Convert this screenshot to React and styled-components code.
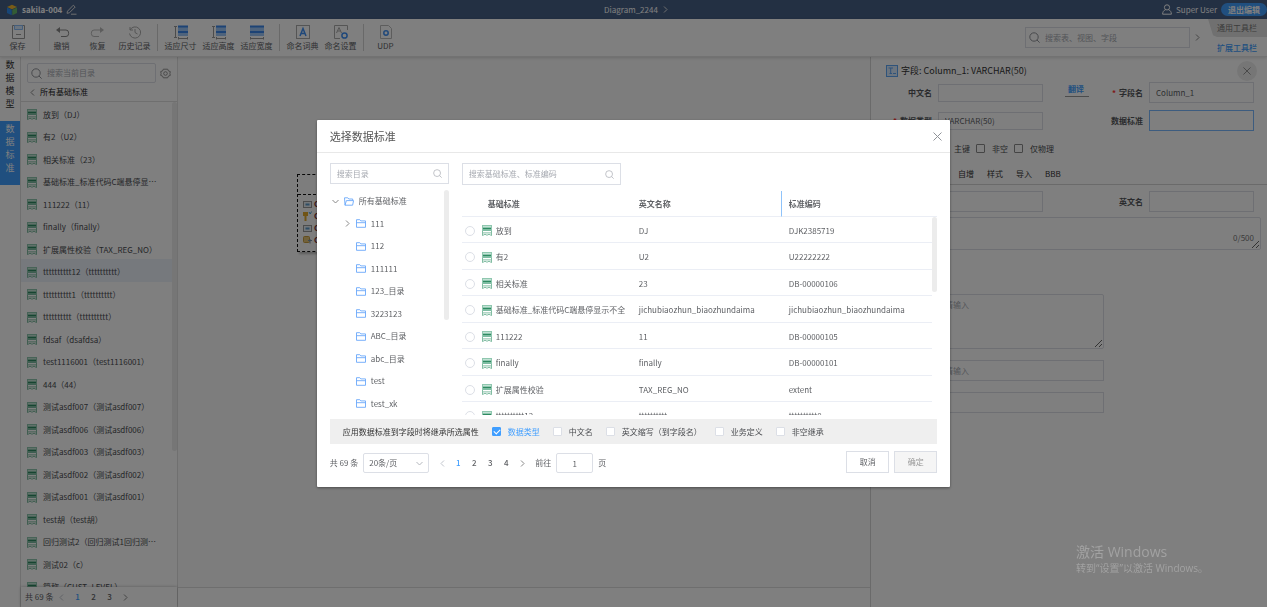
import React from 'react';
import styled, { createGlobalStyle, css } from 'styled-components';

const GlobalStyle = createGlobalStyle`
  * {
    box-sizing: border-box;
  }

  body {
    margin: 0;
    overflow: hidden;
  }

  body, input, button, select, textarea {
    font-family: 'Noto Sans CJK SC', 'Noto Sans', sans-serif;
    font-size: 8px;
    line-height: 12px;
    color: #606266;
  }

  button {
    border: none;
    background: none;
    padding: 0;
  }

  svg {
    display: block;
    flex: none;
  }
`;

const Page = styled.div`
  height: 100vh;
  display: flex;
  flex-direction: column;
  background: #fff;
`;

/* ---------- top bar ---------- */

const TopBar = styled.header`
  height: 19px;
  flex: none;
  display: grid;
  grid-template-columns: 1fr auto 1fr;
  align-items: center;
  padding-left: 6px;
  background: #466087;
  color: #fff;
`;

const TopGroup = styled.div`
  display: flex;
  align-items: center;
  gap: 4px;
  justify-content: ${(p) => (p.$end ? 'flex-end' : 'flex-start')};
  font-weight: ${(p) => (p.$strong ? 700 : 400)};
`;

const ExitButton = styled.button`
  width: 46px;
  height: 13px;
  border-radius: 7px;
  background: #409eff;
  color: #fff;
  font-weight: 700;
`;

/* ---------- toolbar ---------- */

const Toolbar = styled.nav`
  height: 38px;
  flex: none;
  display: flex;
  align-items: center;
  border-bottom: 1px solid #e4e4e4;
  box-shadow: 0 1px 3px rgba(0, 0, 0, 0.15);
  z-index: 1;
`;

const ToolGroup = styled.div`
  display: flex;
  gap: 1px;
  padding-right: 4px;
  margin-right: 4px;
  height: 27px;
  border-right: ${(p) => (p.$last ? 'none' : '1px solid #d2d2d2')};
`;

const ToolButton = styled.button`
  width: ${(p) => (p.$wide ? 37 : 35)}px;
  display: flex;
  flex-direction: column;
  align-items: center;
  justify-content: space-between;
  white-space: nowrap;
`;

const ToolSearch = styled.div`
  margin: 0 7px 0 auto;
  display: flex;
  align-items: center;
  gap: 4px;
  width: 176px;
`;

const SideLinks = styled.div`
  width: 59px;
  height: 37px;
  display: flex;
  flex-direction: column;
`;

const SideLink = styled.a`
  height: 18px;
  padding-left: 9px;
  line-height: 18px;
  text-decoration: none;
  color: #777;

  ${(p) =>
    p.$active
      ? css`
          height: 20px;
          line-height: 22px;
          color: #409eff;
          font-weight: 500;
        `
      : css`
          background: #e0e0e0;
          clip-path: polygon(0 0, 100% 0, 100% 100%, 9px 100%, 5px 90%);
        `}
`;

const SearchBox = styled.label`
  flex: 1;
  min-width: 0;
  height: ${(p) => p.$height || 20}px;
  display: flex;
  align-items: center;
  gap: 5px;
  padding: 0 3px;
  border: 1px solid #dcdfe6;
  border-radius: ${(p) => (p.$round ? 2 : 0)}px;
  background: #fff;

  input {
    flex: 1;
    min-width: 0;
    border: none;
    outline: none;
    padding: 0;
    background: none;
  }

  input::placeholder {
    color: #a8abb2;
  }
`;

/* ---------- workspace ---------- */

const Workspace = styled.div`
  flex: 1;
  min-height: 0;
  display: flex;
`;

const TabRail = styled.div`
  width: 21px;
  border-right: 1px solid #dedede;
`;

const RailTab = styled.button`
  display: block;
  width: 20px;
  height: 64px;
  padding: 0 5px 10px;
  font-size: 9px;
  line-height: 13px;
  background: ${(p) => (p.$active ? '#409eff' : '#fff')};
  color: ${(p) => (p.$active ? '#fff' : '#333')};
`;

const Sidebar = styled.aside`
  width: 157px;
  display: flex;
  flex-direction: column;
  border-right: 1px solid #e0e0e0;
`;

const SidebarSearch = styled.div`
  display: flex;
  align-items: center;
  gap: 4px;
  padding: 6px 6px 0;
`;

const Crumb = styled.div`
  display: flex;
  align-items: center;
  gap: 4px;
  height: 19px;
  padding-left: 8px;
  color: #222;
  border-bottom: 1px solid #dedede;
`;

const ListWrap = styled.div`
  flex: 1;
  min-height: 0;
  display: flex;
  overflow: hidden;
`;

const List = styled.ul`
  flex: 1;
  min-width: 0;
  margin: 0;
  padding: 0;
  list-style: none;
`;

const ListItem = styled.li`
  height: 22px;
  display: flex;
  align-items: center;
  gap: 6px;
  padding: 3px 0 0 6px;
  white-space: nowrap;
  color: #4a4c50;
  background: ${(p) => (p.$active ? '#ecf2fb' : 'transparent')};

  &:nth-child(even) {
    height: 23px;
  }
`;

const ScrollThumb = styled.div`
  width: 5px;
  height: ${(p) => p.$length}px;
  flex: none;
  border-radius: 3px;
  background: #ececec;
`;

const SidebarPager = styled.div`
  height: 20px;
  flex: none;
  padding-left: 4px;
  display: flex;
  align-items: center;
  box-shadow: 0 0 3px rgba(0, 0, 0, 0.3);
`;

const PageButton = styled.button`
  width: 16px;
  height: 16px;
  display: flex;
  align-items: center;
  justify-content: center;
  font-weight: 500;
  color: ${(p) => (p.$active ? '#409eff' : p.$muted ? '#c0c4cc' : '#606266')};
`;

const Pages = styled.div`
  display: flex;
`;

const Canvas = styled.main`
  flex: 1;
  position: relative;
  display: flex;
  flex-direction: column;
  justify-content: flex-end;
  background: #fafafa;
`;

const CanvasFooter = styled.div`
  height: 20px;
  border-top: 1px solid #dcdcdc;
  background: #fff;
`;

const Entity = styled.div`
  position: absolute;
  left: 119px;
  top: 117px;
  width: 90px;
  height: 78px;
  border: 1px dashed #111;
  box-shadow: 2px 2px 2px #bbb;
`;

const EntityHead = styled.div`
  height: 20px;
  border-bottom: 1px dashed #111;
`;

const EntityRow = styled.div`
  height: 12px;
  padding-left: 5px;
  display: flex;
  align-items: center;
  gap: 2px;
  color: #733;
  font-weight: 700;

  &:nth-child(2) {
    margin-top: 3px;
  }
`;

/* ---------- property panel ---------- */

const Panel = styled.aside`
  width: 397px;
  border-left: 1px solid #d5d5d5;
`;

const PanelHead = styled.div`
  height: 25px;
  display: flex;
  align-items: center;
  gap: 3px;
  padding: 2px 10px 0 15px;
  font-size: 9px;
  color: #333;
`;

const CloseCircle = styled.button`
  width: 20px;
  height: 20px;
  margin-left: auto;
  border-radius: 50%;
  display: flex;
  align-items: center;
  justify-content: center;
  background: #ededed;
`;

const Form = styled.div`
  display: grid;
  grid-template-columns: 61px 1fr 94px 1fr;
  grid-auto-rows: 21px;
  align-items: center;
  gap: 7px 6px;
  padding: ${(p) => p.$top || 0}px 13px 0 0;
`;

const Label = styled.label`
  display: flex;
  align-items: center;
  justify-content: flex-end;
  gap: 3px;
  color: #55575b;
  font-weight: 700;
`;

const Required = styled.span`
  color: #f33;
`;

const TranslateCell = styled.div`
  display: flex;
  align-items: center;
  justify-content: space-between;
  padding-left: 16px;
`;

const Translate = styled.button`
  height: 14px;
  padding: 0 5px 0 3px;
  border-bottom: 1px solid #999;
  margin-bottom: 6px;
  color: #409eff;
  font-weight: 700;
`;

const Field = styled.input`
  width: 100%;
  height: ${(p) => (p.$short ? 18 : 21)}px;
  padding: 0 6px;
  border: 1px solid ${(p) => (p.$focus ? '#7ab8ff' : '#dcdfe6')};
  background: #fff;
  outline: none;

  &::placeholder {
    color: #a8abb2;
  }
`;

const CheckRow = styled.div`
  display: flex;
  align-items: center;
  gap: 6px;
  height: 21px;
  margin-top: 7px;
  padding-left: 67px;
`;

const CheckLabel = styled.label`
  display: flex;
  align-items: center;
  gap: 7px;
  white-space: nowrap;
  color: ${(p) => (p.$checked ? '#409eff' : '#4a4c50')};
`;

const Checkbox = styled.input`
  appearance: none;
  position: relative;
  width: 9px;
  height: 9px;
  flex: none;
  margin: 0;
  border: 1px solid ${(p) => (p.$dark ? '#8a8a8a' : '#dcdfe6')};
  border-radius: 1px;
  background: #fff;

  &:checked {
    background: #409eff;
    border-color: #409eff;
  }

  &:checked::after {
    content: '';
    position: absolute;
    left: 2px;
    top: 0;
    width: 3px;
    height: 5px;
    border: solid #fff;
    border-width: 0 1px 1px 0;
    transform: rotate(45deg);
  }
`;

const PanelTabs = styled.div`
  height: 26px;
  display: flex;
  align-items: center;
  gap: 13px;
  padding: 4px 0 0 87px;
  border-bottom: 1px solid #d5d5d5;

  button {
    color: #333;
  }
`;

const Area = styled.textarea`
  display: block;
  width: 100%;
  height: ${(p) => p.$height}px;
  padding: 4px 6px;
  border: 1px solid #dcdfe6;
  border-radius: 2px;
  background: #fff;

  &::placeholder {
    color: #a8abb2;
  }
`;

const Comment = styled.div`
  position: relative;
  margin: 5px 6px 0 67px;
`;

const Counter = styled.span`
  position: absolute;
  right: 7px;
  bottom: 6px;
  color: #777;
`;

const Extras = styled.div`
  width: 166px;
  margin: 44px 0 0 67px;
  display: flex;
  flex-direction: column;
  gap: 11px;
`;

/* ---------- dialog ---------- */

const Overlay = styled.div`
  position: fixed;
  inset: 0;
  z-index: 10;
  display: flex;
  justify-content: center;
  align-items: flex-start;
  padding-top: 120px;
  background: rgba(0, 0, 0, 0.5);
`;

const Dialog = styled.section`
  width: 50%;
  background: #fff;
  border-radius: 1px;
  box-shadow: 0 1px 3px rgba(0, 0, 0, 0.4);
`;

const DialogHead = styled.div`
  height: 33px;
  display: flex;
  align-items: center;
  justify-content: space-between;
  padding: 0 8px 0 13px;
  border-bottom: 1px solid #e8e8e8;
`;

const DialogTitle = styled.h2`
  margin: 0;
  font-size: 11px;
  line-height: 16px;
  font-weight: 400;
  color: #555;
`;

const CloseButton = styled.button`
  display: flex;
`;

const DialogBody = styled.div`
  padding: 10px 13px 0;
`;

const Columns = styled.div`
  display: grid;
  grid-template-columns: 119px minmax(0, 1fr);
  gap: 13px;
  height: 252px;
`;

const Column = styled.div`
  display: flex;
  flex-direction: column;
  gap: 6px;
  min-height: 0;
`;

const DialogSearch = styled.div`
  display: flex;
  width: ${(p) => (p.$fit ? '159px' : '100%')};

  label {
    padding: 0 6px;
  }

  input::placeholder {
    color: #a8abb2;
  }
`;

const TreeItem = styled.li`
  height: 22px;
  display: flex;
  align-items: center;
  gap: 5px;
  padding-left: ${(p) => (p.$nested ? 14 : 2)}px;

  &:nth-child(even) {
    height: 23px;
  }
`;

const Arrow = styled.span`
  width: 7px;
  display: flex;
  justify-content: center;
`;

const TableWrap = styled.div`
  position: relative;
  flex: 1;
  min-height: 0;
  overflow: hidden;
`;

const TableTrack = styled.div`
  position: absolute;
  right: 0;
  top: 26px;
  bottom: 0;
  background: #fff;
`;

const Table = styled.table`
  width: 100%;
  table-layout: fixed;
  border-collapse: separate;
  border-spacing: 0;

  th, td {
    height: 26px;
    padding: 0 0 0 7px;
    text-align: left;
    border-bottom: 1px solid #ebeef5;
    white-space: nowrap;
  }

  th {
    font-weight: 700;
  }

  td {
    padding-top: 2px;
  }

  th:first-child {
    padding-left: 26px;
  }

  th:last-child {
    border-left: 1px solid #8fc3fa;
  }

  td:first-child {
    padding-left: 3px;
  }

  td:last-child {
    padding-left: 8px;
  }

  tbody tr:nth-child(even) td {
    height: 27px;
  }
`;

const NameCell = styled.label`
  display: flex;
  align-items: center;
  gap: 4px;
`;

const Radio = styled.input`
  appearance: none;
  width: 10px;
  height: 10px;
  margin: 0 3px 0 0;
  border: 1px solid #dcdfe6;
  border-radius: 50%;
`;

const InheritBar = styled.div`
  height: 25px;
  margin-top: 4px;
  display: flex;
  align-items: center;
  gap: 13px;
  padding-left: 13px;
  background: #efefef;
  color: #333;
`;

const DialogFoot = styled.div`
  height: 43px;
  display: flex;
  align-items: flex-start;
  justify-content: space-between;
  padding-top: 7px;
`;

const Pager = styled.div`
  display: flex;
  align-items: center;
  gap: 5px;
  padding-top: 2px;
`;

const SizePicker = styled.div`
  display: flex;
  align-items: center;
  width: 66px;
  height: 20px;
  padding-right: 5px;
  border: 1px solid #dcdfe6;
  border-radius: 2px;

  select {
    flex: 1;
    appearance: none;
    border: none;
    background: none;
    padding: 0 5px;
  }
`;

const JumpInput = styled.input`
  width: 37px;
  height: 20px;
  border: 1px solid #dcdfe6;
  border-radius: 2px;
  text-align: center;
`;

const Actions = styled.div`
  display: flex;
  gap: 5px;
`;

const ActionButton = styled.button`
  width: 43px;
  height: 22px;
  border: 1px solid #dcdfe6;
  background: #fff;

  &:disabled {
    background: #f5f5f5;
    color: #999;
  }
`;

const Watermark = styled.div`
  position: fixed;
  right: 58px;
  bottom: 32px;
  width: 133px;
  z-index: 11;
  font-family: 'Open Sans', 'Noto Sans CJK SC', sans-serif;
  font-size: 10px;
  line-height: 14px;
  white-space: nowrap;
  color: #a2a2a2;
`;

const WatermarkTitle = styled.div`
  font-size: 14px;
  line-height: 18px;
`;

/* ---------- icons ---------- */

const Search = ({ size = 11, color = '#909399' }) => (
  <svg width={size} height={size} viewBox="0 0 11 11" fill="none" stroke={color}>
    <circle cx="5" cy="5" r="4.2" />
    <path d="M8 8l2.6 2.6" />
  </svg>
);

const Chevron = ({ dir = 'right', color = '#888', size = 7 }) => {
  const paths = {
    right: 'M2 0.5L5 3.5L2 6.5',
    left: 'M5 0.5L2 3.5L5 6.5',
    down: 'M0.5 2L3.5 5L6.5 2',
  };
  return (
    <svg width={size} height={size} viewBox="0 0 7 7" fill="none" stroke={color}>
      <path d={paths[dir]} />
    </svg>
  );
};

const Cross = ({ size = 9, color = '#909399' }) => (
  <svg width={size} height={size} viewBox="0 0 9 9" fill="none" stroke={color}>
    <path d="M0.5 0.5l8 8M8.5 0.5l-8 8" />
  </svg>
);

const Folder = ({ open }) => (
  <svg width="10" height="9" viewBox="0 0 10 9" fill="none" stroke="#6aa8fb" strokeWidth="0.9">
    {open ? (
      <path d="M1 8.2L0.5 0.8H3.8L4.8 2H8.7V3.5M1 8.2L2.4 3.6H9.6L8.6 8.2Z" />
    ) : (
      <path d="M0.5 8.3V0.7H3.8L4.8 1.9H9.5V8.3ZM0.5 3.7H9.5" />
    )}
  </svg>
);

const StandardIcon = () => (
  <svg width="10" height="11" viewBox="0 0 10 11" fill="none">
    <rect x="0" y="0" width="10" height="6" fill="#8fc7af" />
    <path d="M1 1.5H9" stroke="#c3e2d5" />
    <path d="M1 3.5H9" stroke="#2f8a62" />
    <path d="M1 5H9" stroke="#6cb295" />
    <path d="M0.5 6V10.6M9.5 6V10.6M1 7.9H9M0.5 10.5L3 9.3L5 10.2L7 9.3L9.5 10.5" stroke="#74b598" strokeWidth="0.9" />
  </svg>
);

const Logo = () => (
  <svg width="12" height="12" viewBox="0 0 12 12">
    <path d="M6 0.8L11 3L6 5.3L1 3Z" fill="#f2b92e" />
    <path d="M1 3.6L5.7 5.8V11.3L1 8.9Z" fill="#2f8df0" />
    <path d="M11 3.6L6.3 5.8V11.3L11 8.9Z" fill="#67b96a" />
  </svg>
);

const Pencil = () => (
  <svg width="11" height="11" viewBox="0 0 11 11" fill="none" stroke="#ddd">
    <path d="M1.5 7.2L7.3 1.2L9.2 3L3.4 8.8L1 9.3ZM5 10.2H10.5" />
  </svg>
);

const UserIcon = () => (
  <svg width="10" height="11" viewBox="0 0 10 11" fill="none" stroke="#fff">
    <circle cx="5" cy="3.4" r="2.6" />
    <path d="M3.5 5.8C1.5 6.4 0.7 8 0.6 10.2H9.4C9.3 8 8.5 6.4 6.5 5.8" />
  </svg>
);

const Gear = () => (
  <svg width="11" height="11" viewBox="0 0 11 11" fill="none" stroke="#888" strokeWidth="0.9">
    <path d="M3.3 1.2H7.7L8.4 2.9L10.3 3.6L9.9 5.5L10.3 7.4L8.4 8.1L7.7 9.8H3.3L2.6 8.1L0.7 7.4L1.1 5.5L0.7 3.6L2.6 2.9Z" />
    <circle cx="5.5" cy="5.5" r="1.8" />
  </svg>
);

const FieldIcon = () => (
  <svg width="12" height="12" viewBox="0 0 12 12" fill="none" stroke="#5fa6f5">
    <rect x="0.5" y="0.5" width="11" height="11" fill="#d9ebff" />
    <path d="M2.5 3H7M4.7 3V8.5M3.5 8.5H6M7 8.5H10" />
  </svg>
);

const toolDrawings = {
  save: (
    <g fill="none" stroke="#999">
      <path d="M2.5 1.5H14.5V14.5H2.5Z" />
      <path d="M4.5 1.5H12.5V5.5H4.5Z" fill="#d9ebff" stroke="#8bbcf7" />
      <path d="M6 10.5H11" />
    </g>
  ),
  undo: (
    <g fill="none" stroke="#888">
      <path d="M5 6H12A2.5 3 0 0 1 12 12.5H7" />
      <path d="M6 3L2 6L6 9Z" fill="#888" stroke="none" />
    </g>
  ),
  redo: (
    <g fill="none" stroke="#bbb">
      <path d="M11 6H4A2.5 3 0 0 0 4 12.5H9" />
      <path d="M10 3L14 6L10 9Z" fill="#bbb" stroke="none" />
    </g>
  ),
  history: (
    <path d="M3 3V6H6M3 6A5.6 5.6 0 1 1 2.5 9.5M8 5V8.5L10.5 10" fill="none" stroke="#aaa" />
  ),
  size: (
    <g fill="none">
      <path d="M1 2.5H4M2.5 2.5V13.5M1 13.5H4M5.5 13V15.5M14.5 13V15.5M5.5 14.5H14.5" stroke="#999" />
      <rect x="5" y="2" width="10" height="10" fill="#9cc6f8" />
      <path d="M5 2.5H15M5 8H15" stroke="#3a87ea" strokeWidth="2" />
    </g>
  ),
  width: (
    <g fill="none">
      <rect x="1" y="2" width="14" height="10" fill="#9cc6f8" />
      <path d="M1 2.5H15M1 8H15" stroke="#3a87ea" strokeWidth="2" />
      <path d="M1.5 13V15.5M14.5 13V15.5M1.5 14.5H14.5" stroke="#999" />
    </g>
  ),
  dict: (
    <g fill="none">
      <rect x="1.5" y="1.5" width="13" height="13" stroke="#aaa" />
      <path d="M5 12L8 4.5L11 12M6 9.5H10" stroke="#3f90f5" strokeWidth="1.5" />
    </g>
  ),
  naming: (
    <g fill="none">
      <path d="M7 14.5H1.5V1.5H14.5V6M3.5 9L6 3.5L8.5 9M4.5 7H7.5" stroke="#aaa" />
      <circle cx="11.5" cy="11.5" r="2.6" stroke="#3f90f5" strokeWidth="1.5" />
    </g>
  ),
  udp: (
    <g fill="none">
      <path d="M2.5 1.5H10.5L13.5 4.5V14.5H2.5Z" stroke="#bbb" />
      <circle cx="8" cy="9" r="2.2" stroke="#3f90f5" strokeWidth="1.5" />
    </g>
  ),
};

const ToolIcon = ({ name }) => (
  <svg width="16" height="16" viewBox="0 0 16 16">{toolDrawings[name]}</svg>
);

const ColumnIcon = ({ pk }) =>
  pk ? (
    <svg width="9" height="10" viewBox="0 0 9 10">
      <path d="M0 1H5V5H3.5V10H1.5V5H0Z" fill="#e0a82a" />
      <path d="M6 1L7.2 3L8.6 0.5" stroke="#4aa5d8" fill="none" />
    </svg>
  ) : (
    <svg width="9" height="7" viewBox="0 0 9 7">
      <rect x="0.5" y="0.5" width="8" height="6" fill="#e6eef5" stroke="#999" />
      <path d="M2.5 3.5H6.5" stroke="#5f9ac8" strokeWidth="2" />
    </svg>
  );

const ForeignIcon = () => (
  <svg width="9" height="8" viewBox="0 0 9 8">
    <rect x="0.5" y="0.5" width="6" height="6" rx="1" fill="#e3c277" stroke="#c79a3a" />
    <path d="M5 4.5H9M7 3V7.5" stroke="#7a93a8" fill="none" />
  </svg>
);

/* ---------- data ---------- */

const toolGroups = [
  [{ icon: 'save', text: '保存' }],
  [
    { icon: 'undo', text: '撤销' },
    { icon: 'redo', text: '恢复' },
    { icon: 'history', text: '历史记录' },
  ],
  [
    { icon: 'size', text: '适应尺寸' },
    { icon: 'size', text: '适应高度' },
    { icon: 'width', text: '适应宽度' },
  ],
  [
    { icon: 'dict', text: '命名词典' },
    { icon: 'naming', text: '命名设置' },
  ],
  [{ icon: 'udp', text: 'UDP' }],
];

const standards = [
  '放到（DJ）',
  '有2（U2）',
  '相关标准（23）',
  '基础标准_标准代码C端悬停显…',
  '111222（11）',
  'finally（finally）',
  '扩展属性校验（TAX_REG_NO）',
  'tttttttttt12（tttttttttt）',
  'tttttttttt1（tttttttttt）',
  'tttttttttt（tttttttttt）',
  'fdsaf（dsafdsa）',
  'test1116001（test1116001）',
  '444（44）',
  '测试asdf007（测试asdf007）',
  '测试asdf006（测试asdf006）',
  '测试asdf003（测试asdf003）',
  '测试asdf002（测试asdf002）',
  '测试asdf001（测试asdf001）',
  'test胡（test胡）',
  '回归测试2（回归测试1回归测…',
  '测试02（c）',
  '简称（CUST_LEVEL）',
];

const folders = ['111', '112', '111111', '123_目录', '3223123', 'ABC_目录', 'abc_目录', 'test', 'test_xk'];

const rows = [
  ['放到', 'DJ', 'DJK2385719'],
  ['有2', 'U2', 'U22222222'],
  ['相关标准', '23', 'DB-00000106'],
  ['基础标准_标准代码C端悬停显示不全', 'jichubiaozhun_biaozhundaima', 'jichubiaozhun_biaozhundaima'],
  ['111222', '11', 'DB-00000105'],
  ['finally', 'finally', 'DB-00000101'],
  ['扩展属性校验', 'TAX_REG_NO', 'extent'],
  ['tttttttttt12', 'tttttttttt', 'tttttttttt0'],
];

const inheritOptions = ['数据类型', '中文名', '英文缩写（到字段名）', '业务定义', '非空继承'];

const entityIcons = [<ColumnIcon />, <ColumnIcon pk />, <ColumnIcon />, <ForeignIcon />];

function PageNumbers({ count }) {
  return (
    <Pages>
      <PageButton $muted aria-label="上一页"><Chevron dir="left" color="#c0c4cc" /></PageButton>
      {Array.from({ length: count }, (_, i) => (
        <PageButton key={i} $active={i === 0}>{i + 1}</PageButton>
      ))}
      <PageButton aria-label="下一页"><Chevron /></PageButton>
    </Pages>
  );
}

function PropertyPanel() {
  return (
    <Panel>
      <PanelHead>
        <FieldIcon />
        字段: Column_1: VARCHAR(50)
        <CloseCircle aria-label="关闭面板"><Cross size={8} color="#888" /></CloseCircle>
      </PanelHead>
      <Form>
        <Label htmlFor="cn-name">中文名</Label>
        <Field id="cn-name" $short />
        <TranslateCell>
          <Translate>翻译</Translate>
          <Label htmlFor="field-name"><Required>*</Required>字段名</Label>
        </TranslateCell>
        <Field id="field-name" defaultValue="Column_1" />
        <Label htmlFor="data-type"><Required>*</Required>数据类型</Label>
        <Field id="data-type" $short defaultValue="VARCHAR(50)" />
        <Label htmlFor="data-standard">数据标准</Label>
        <Field id="data-standard" $focus />
      </Form>
      <CheckRow>
        {['主键', '非空', '仅物理'].map((text) => (
          <CheckLabel key={text}>
            <Checkbox type="checkbox" $dark />
            {text}
          </CheckLabel>
        ))}
      </CheckRow>
      <PanelTabs>
        {['自增', '样式', '导入', 'BBB'].map((text) => (
          <button key={text}>{text}</button>
        ))}
      </PanelTabs>
      <Form $top={6}>
        <Label htmlFor="alias" />
        <Field id="alias" />
        <Label htmlFor="en-name">英文名</Label>
        <Field id="en-name" />
      </Form>
      <Comment>
        <Area $height={33} aria-label="备注" />
        <Counter>0/500</Counter>
      </Comment>
      <Extras>
        <Area $height={55} placeholder="请输入" aria-label="业务定义" />
        <Field placeholder="请输入" aria-label="扩展属性" />
        <Field aria-label="扩展属性二" />
      </Extras>
    </Panel>
  );
}

function StandardDialog() {
  return (
    <Dialog role="dialog" aria-labelledby="dialog-title">
      <DialogHead>
        <DialogTitle id="dialog-title">选择数据标准</DialogTitle>
        <CloseButton aria-label="关闭"><Cross /></CloseButton>
      </DialogHead>
      <DialogBody>
        <Columns>
          <Column>
            <DialogSearch>
              <SearchBox $height={21}>
                <input placeholder="搜索目录" />
                <Search size={9} color="#b4b7bd" />
              </SearchBox>
            </DialogSearch>
            <ListWrap>
              <List>
                <TreeItem>
                  <Arrow><Chevron dir="down" /></Arrow>
                  <Folder open />
                  所有基础标准
                </TreeItem>
                {folders.map((name, i) => (
                  <TreeItem key={name} $nested>
                    <Arrow>{i === 0 && <Chevron />}</Arrow>
                    <Folder />
                    {name}
                  </TreeItem>
                ))}
              </List>
              <ScrollThumb $length={130} />
            </ListWrap>
          </Column>
          <Column>
            <DialogSearch $fit>
              <SearchBox $height={22}>
                <input placeholder="搜索基础标准、标准编码" />
                <Search size={9} color="#b4b7bd" />
              </SearchBox>
            </DialogSearch>
            <TableWrap>
              <Table>
                <colgroup>
                  <col width="170" />
                  <col width="149" />
                  <col />
                </colgroup>
                <thead>
                  <tr>
                    <th>基础标准</th>
                    <th>英文名称</th>
                    <th>标准编码</th>
                  </tr>
                </thead>
                <tbody>
                  {rows.map(([name, en, code]) => (
                    <tr key={name}>
                      <td>
                        <NameCell>
                          <Radio type="radio" name="standard" />
                          <StandardIcon />
                          {name}
                        </NameCell>
                      </td>
                      <td>{en}</td>
                      <td>{code}</td>
                    </tr>
                  ))}
                </tbody>
              </Table>
              <TableTrack><ScrollThumb $length={75} /></TableTrack>
            </TableWrap>
          </Column>
        </Columns>
        <InheritBar>
          应用数据标准到字段时将继承所选属性
          {inheritOptions.map((text, i) => (
            <CheckLabel key={text} $checked={i === 0}>
              <Checkbox type="checkbox" defaultChecked={i === 0} />
              {text}
            </CheckLabel>
          ))}
        </InheritBar>
        <DialogFoot>
          <Pager>
            共 69 条
            <SizePicker>
              <select aria-label="每页条数">
                <option>20条/页</option>
              </select>
              <Chevron dir="down" color="#b4b7bd" />
            </SizePicker>
            <PageNumbers count={4} />
            前往
            <JumpInput defaultValue="1" aria-label="页码" />
            页
          </Pager>
          <Actions>
            <ActionButton>取消</ActionButton>
            <ActionButton disabled>确定</ActionButton>
          </Actions>
        </DialogFoot>
      </DialogBody>
    </Dialog>
  );
}

function App() {
  return (
    <Page>
      <GlobalStyle />
      <TopBar>
        <TopGroup $strong>
          <Logo />
          sakila-004
          <Pencil />
        </TopGroup>
        <TopGroup>
          Diagram_2244
          <Chevron color="#ddd" />
        </TopGroup>
        <TopGroup $end>
          <UserIcon />
          Super User
          <ExitButton>退出编辑</ExitButton>
        </TopGroup>
      </TopBar>

      <Toolbar>
        {toolGroups.map((group, i) => (
          <ToolGroup key={i} $last={i === toolGroups.length - 1}>
            {group.map((tool) => (
              <ToolButton key={tool.text} $wide={tool.text.length > 3}>
                <ToolIcon name={tool.icon} />
                {tool.text}
              </ToolButton>
            ))}
          </ToolGroup>
        ))}
        <ToolSearch>
          <SearchBox $height={21}>
            <Search />
            <input placeholder="搜索表、视图、字段" />
          </SearchBox>
          <Chevron />
        </ToolSearch>
        <SideLinks>
          <SideLink href="#common">通用工具栏</SideLink>
          <SideLink href="#extra" $active>扩展工具栏</SideLink>
        </SideLinks>
      </Toolbar>

      <Workspace>
        <TabRail>
          <RailTab>数据模型</RailTab>
          <RailTab $active>数据标准</RailTab>
        </TabRail>
        <Sidebar>
          <SidebarSearch>
            <SearchBox $round>
              <Search />
              <input placeholder="搜索当前目录" />
            </SearchBox>
            <Gear />
          </SidebarSearch>
          <Crumb>
            <Chevron dir="left" />
            所有基础标准
          </Crumb>
          <ListWrap>
            <List>
              {standards.map((text, i) => (
                <ListItem key={text} $active={i === 7}>
                  <StandardIcon />
                  {text}
                </ListItem>
              ))}
            </List>
            <ScrollThumb $length={349} />
          </ListWrap>
          <SidebarPager>
            共 69 条
            <PageNumbers count={3} />
          </SidebarPager>
        </Sidebar>
        <Canvas>
          <Entity>
            <EntityHead />
            {entityIcons.map((icon, i) => (
              <EntityRow key={i}>
                {icon}
                Column
              </EntityRow>
            ))}
          </Entity>
          <CanvasFooter />
        </Canvas>
        <PropertyPanel />
      </Workspace>

      <Overlay>
        <StandardDialog />
      </Overlay>
      <Watermark>
        <WatermarkTitle>激活 Windows</WatermarkTitle>
        转到“设置”以激活 Windows。
      </Watermark>
    </Page>
  );
}

export default App;
